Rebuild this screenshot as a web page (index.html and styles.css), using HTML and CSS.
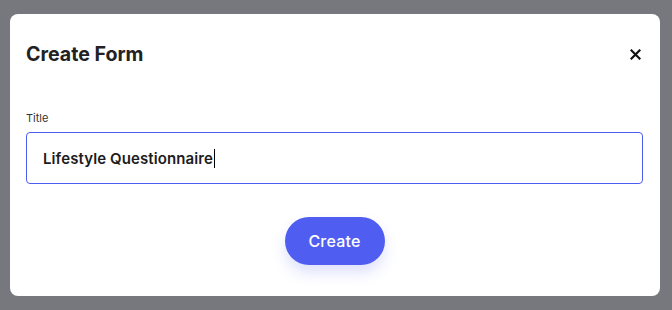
FILE: index.html
```html
<!DOCTYPE html>
<html>
<head>
<meta charset="utf-8">
<link rel="stylesheet" href="styles.css">
</head>
<body>
<div class="overlay">
  <div class="modal">
    <div class="modal-header">
      <h2 class="modal-title">Create Form</h2>
      <button class="close-btn" aria-label="Close">
        <svg width="11" height="11" viewBox="0 0 11 11"><path d="M1.5 1.5 L9.5 9.5 M9.5 1.5 L1.5 9.5" stroke="#111" stroke-width="2.2" stroke-linecap="square"/></svg>
      </button>
    </div>
    <label class="field-label">Title</label>
    <div class="input">Lifestyle Questionnaire<span class="caret"></span></div>
    <div class="actions">
      <button class="create-btn">Create</button>
    </div>
  </div>
</div>
</body>
</html>
```
FILE: styles.css
```css
html, body {
  margin: 0;
  padding: 0;
}
body {
  width: 672px;
  height: 310px;
  background: #77787d;
  font-family: Inter, "Noto Sans", sans-serif;
  overflow: hidden;
}
.overlay {
  padding: 14px 12px 14px 10px;
  height: 310px;
  box-sizing: border-box;
}
.modal {
  background: #fff;
  border-radius: 8px;
  height: 282px;
  width: 650px;
  box-sizing: border-box;
  padding: 0 17px 0 16px;
}
.modal-header {
  display: flex;
  align-items: center;
  justify-content: space-between;
  height: 80px;
}
.modal-title {
  margin: 0;
  font-size: 19.6px;
  font-weight: 700;
  color: #222;
  letter-spacing: 0;
}
.close-btn {
  border: 0;
  background: none;
  padding: 0;
  margin-right: 2px;
  display: flex;
  margin-top: 1px;
}
.field-label {
  display: block;
  margin-top: 17px;
  font-size: 11px;
  color: #333;
  line-height: 14px;
}
.input {
  margin-top: 7px;
  height: 52px;
  box-sizing: border-box;
  border: 1px solid #4b5cf0;
  border-radius: 4px;
  padding: 0 16px;
  display: flex;
  align-items: center;
  font-size: 15px;
  font-weight: 600;
  letter-spacing: 0.1px;
  color: #1c1c1c;
}
.caret {
  display: inline-block;
  width: 1px;
  height: 19px;
  background: #000;
  margin-left: 1px;
}
.actions {
  display: flex;
  justify-content: center;
  margin-top: 33px;
}
.create-btn {
  width: 100px;
  height: 48px;
  border: 0;
  border-radius: 24px;
  background: #4f5ef0;
  color: #fff;
  font-family: Inter, "Noto Sans", sans-serif;
  font-size: 16px;
  font-weight: 500;
  letter-spacing: 0.2px;
  box-shadow: 0 8px 14px rgba(79, 94, 240, 0.18);
}
```
